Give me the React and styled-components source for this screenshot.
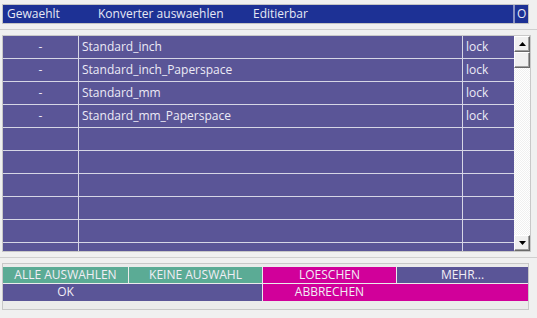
import React from "react";
import styled, { createGlobalStyle } from "styled-components";

const GlobalStyle = createGlobalStyle`
    html, body {
        margin: 0;
        padding: 0;
        background: #f0f0f0;
    }
    body {
        font-family: "Open Sans", "Noto Sans", sans-serif;
        font-size: 12px;
    }
`;

const Page = styled.div`
    width: 537px;
    height: 318px;
    display: flex;
    flex-direction: column;
    box-sizing: border-box;
    padding-top: 4px;
    overflow: hidden;
`;

const HeaderBar = styled.div`
    margin: 0 8px 0 2px;
    border: 1px solid #c4c4c4;
    height: 18px;
    display: flex;
    background: #1d3195;
    color: #e6e8f4;
    line-height: 18px;
`;

const HeaderCell = styled.div`
    width: ${(p) => p.w}px;
    flex: ${(p) => (p.grow ? 1 : "none")};
    padding-left: ${(p) => (p.sep ? 2 : 4)}px;
    box-sizing: border-box;
    border-left: ${(p) => (p.sep ? "2px solid #8a93c4" : "none")};
    white-space: nowrap;
`;

const Divider = styled.div`
    height: 1px;
    background: #cfcfcf;
    margin: ${(p) => p.m};
`;

const TablePanel = styled.div`
    margin: 0 6px 0 2px;
    height: 215px;
    border: 1px solid #c8c8c8;
    display: flex;
    overflow: hidden;
`;

const Grid = styled.div`
    flex: 1;
    background: #5a5597;
    display: flex;
    flex-direction: column;
`;

const Row = styled.div`
    display: grid;
    grid-template-columns: 76px 384px 1fr;
    height: 22px;
    flex: none;
    border-bottom: 1px solid #d6d6e6;
    color: #eceaf6;
    line-height: 22px;
`;

const Cell = styled.div`
    text-align: ${(p) => (p.center ? "center" : "left")};
    padding-left: ${(p) => (p.center ? 0 : 3)}px;
    border-right: ${(p) => (p.last ? "none" : "1px solid #d6d6e6")};
    white-space: nowrap;
`;

const Scrollbar = styled.div`
    width: 16px;
    display: flex;
    flex-direction: column;
    background-color: #fafafa;
    background-image: repeating-conic-gradient(#ffffff 0 25%, #f0f0f0 0 50%);
    background-size: 2px 2px;
`;

const ScrollButton = styled.div`
    height: 16px;
    box-sizing: border-box;
    background: #f0f0f0;
    border: 1px solid;
    border-color: #ffffff #696969 #696969 #ffffff;
    box-shadow: inset -1px -1px 0 #a0a0a0;
    display: flex;
    align-items: center;
    justify-content: center;
    margin-top: ${(p) => (p.bottom ? "auto" : 0)};
`;

const Thumb = styled.div`
    height: 16px;
    box-sizing: border-box;
    background: #f0f0f0;
    border: 1px solid;
    border-color: #ffffff #696969 #696969 #ffffff;
    box-shadow: inset -1px -1px 0 #a0a0a0;
`;

const ButtonPanel = styled.div`
    margin: 0 8px 0 2px;
    height: 47px;
    border: 1px solid #c8c8c8;
    box-sizing: border-box;
    padding: 3px 0 0 0;
    display: grid;
    grid-template-columns: 125px 133px 133px 1fr;
    grid-template-rows: 16px 17px;
    gap: 1px;
    align-content: start;
    background: #ebebeb;
`;

const ActionButton = styled.div`
    grid-column: span ${(p) => p.span || 1};
    background: ${(p) => p.bg};
    color: #f2eef6;
    text-align: center;
    line-height: 16px;
    white-space: nowrap;
`;

const ButtonLabel = styled.span`
    display: block;
    width: ${(p) => p.w}px;
    text-align: center;
`;

const rows = [
    { name: "Standard_inch", lock: "lock" },
    { name: "Standard_inch_Paperspace", lock: "lock" },
    { name: "Standard_mm", lock: "lock" },
    { name: "Standard_mm_Paperspace", lock: "lock" },
];

const Arrow = ({ down }) => (
    <svg width="7" height="4" viewBox="0 0 7 4">
        <path d={down ? "M0 0 L7 0 L3.5 4 Z" : "M0 4 L7 4 L3.5 0 Z"} fill="#000" />
    </svg>
);

const App = () => {
    const filled = [...rows];
    while (filled.length < 10) filled.push(null);

    return (
        <Page>
            <GlobalStyle />
            <HeaderBar>
                <HeaderCell w={91}>Gewaehlt</HeaderCell>
                <HeaderCell w={155}>Konverter auswaehlen</HeaderCell>
                <HeaderCell grow>Editierbar</HeaderCell>
                <HeaderCell w={15} sep>
                    O
                </HeaderCell>
            </HeaderBar>
            <Divider m="5px 0 5px 0" />
            <TablePanel>
                <Grid>
                    {filled.map((r, i) => (
                        <Row key={i}>
                            <Cell center>{r ? "-" : ""}</Cell>
                            <Cell>{r ? r.name : ""}</Cell>
                            <Cell last>{r ? r.lock : ""}</Cell>
                        </Row>
                    ))}
                </Grid>
                <Scrollbar>
                    <ScrollButton>
                        <Arrow />
                    </ScrollButton>
                    <Thumb />
                    <ScrollButton bottom>
                        <Arrow down />
                    </ScrollButton>
                </Scrollbar>
            </TablePanel>
            <Divider m="5px 0 5px 0" />
            <ButtonPanel>
                <ActionButton bg="#5bab95">ALLE AUSWAHLEN</ActionButton>
                <ActionButton bg="#5bab95">KEINE AUSWAHL</ActionButton>
                <ActionButton bg="#d1009a">LOESCHEN</ActionButton>
                <ActionButton bg="#5a5597">MEHR...</ActionButton>
                <ActionButton bg="#5a5597" span={2}>
                    <ButtonLabel w={125}>OK</ButtonLabel>
                </ActionButton>
                <ActionButton bg="#d1009a" span={2}>
                    <ButtonLabel w={133}>ABBRECHEN</ButtonLabel>
                </ActionButton>
            </ButtonPanel>
        </Page>
    );
};

export default App;
